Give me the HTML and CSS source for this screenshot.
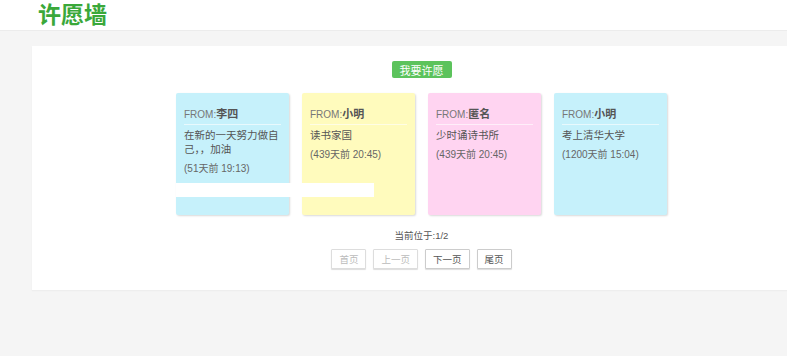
FILE: index.html
```html
<!DOCTYPE html>
<html lang="zh">
<head>
    <meta charset="UTF-8">
    <title>许愿墙</title>
    <link rel="stylesheet" href="styles.css">
</head>
<body>
    <div class="header">
        <h1>许愿墙</h1>
    </div>
    <div class="main">
        <div class="panel">
            <div class="inner">
                <div class="top-bar">
                    <button class="wish-btn">我要许愿</button>
                </div>
                <div class="wall">
                    <div class="note blue">
                        <div class="from">FROM:<b>李四</b></div>
                        <div class="text">在新的一天努力做自己，，加油</div>
                        <div class="time">(51天前 19:13)</div>
                    </div>
                    <div class="note yellow">
                        <div class="from">FROM:<b>小明</b></div>
                        <div class="text">读书家国</div>
                        <div class="time">(439天前 20:45)</div>
                    </div>
                    <div class="note pink">
                        <div class="from">FROM:<b>匿名</b></div>
                        <div class="text">少时诵诗书所</div>
                        <div class="time">(439天前 20:45)</div>
                    </div>
                    <div class="note blue">
                        <div class="from">FROM:<b>小明</b></div>
                        <div class="text">考上清华大学</div>
                        <div class="time">(1200天前 15:04)</div>
                    </div>
                    <div class="strip"></div>
                </div>
                <div class="pager">
                    <div class="pos">当前位于:1/2</div>
                    <div class="pages">
                        <button class="disabled">首页</button>
                        <button class="disabled">上一页</button>
                        <button>下一页</button>
                        <button>尾页</button>
                    </div>
                </div>
            </div>
        </div>
    </div>
</body>
</html>
```

FILE: styles.css
```css
body {
    margin: 0;
    padding: 0;
    font-family: "Liberation Sans", Arial, "Noto Sans CJK SC", sans-serif;
    background-color: #f5f5f5;
    color: #555;
    height: 356px;
    overflow: hidden;
}
.header {
    background-color: #fff;
    height: 31px;
    padding-left: 38px;
    border-bottom: 1px solid #ececec;
    box-sizing: border-box;
}
.header h1 {
    margin: 0;
    font-size: 23px;
    line-height: 30px;
    color: #3aa83a;
    font-weight: bold;
}
.main {
    padding: 15px 0 0 32px;
}
.panel {
    background-color: #fff;
    height: 244px;
    box-shadow: 0 1px 1px #eee;
}
.inner {
    width: 491px;
    margin-left: 144px;
}
.top-bar {
    display: flex;
    justify-content: center;
    padding-top: 15px;
}
.wish-btn {
    font-family: inherit;
    width: 60px;
    height: 17px;
    padding: 0;
    font-size: 11px;
    color: #fff;
    background-color: #5cc35c;
    border: none;
    border-radius: 2px;
}
.wall {
    position: relative;
    display: flex;
    gap: 13px;
    margin-top: 15px;
}
.note {
    width: 113px;
    height: 122px;
    padding: 12px 8px 0;
    box-sizing: border-box;
    box-shadow: 1px 1px 2px rgba(0, 0, 0, 0.15);
    border-radius: 2px;
    font-size: 10px;
}
.note.blue { background-color: #c6f1fb; }
.note.yellow { background-color: #fffbbd; }
.note.pink { background-color: #ffd4f1; }
.from {
    padding-bottom: 3px;
    border-bottom: 1px solid rgba(255, 255, 255, 0.6);
    font-size: 10px;
    color: #777;
}
.from b {
    color: #555;
    font-size: 11px;
}
.text {
    margin-top: 3px;
    line-height: 14px;
    color: #555;
    font-size: 10.5px;
}
.time {
    margin-top: 4px;
    color: #666;
}
.strip {
    position: absolute;
    left: 0;
    top: 90px;
    width: 198px;
    height: 14px;
    background-color: #fff;
}
.pager {
    display: flex;
    flex-direction: column;
    align-items: center;
    margin-top: 13px;
}
.pos {
    font-size: 9.5px;
    color: #555;
}
.pages {
    display: flex;
    gap: 7px;
    margin-top: 7px;
}
.pages button {
    font-family: inherit;
    height: 20px;
    padding: 0 7px;
    font-size: 9.5px;
    color: #555;
    background-color: #fff;
    border: 1px solid #ccc;
    border-radius: 1px;
    box-shadow: 0 1px 1px #ddd;
}
.pages button.disabled {
    color: #bbb;
    border-color: #ddd;
}
```
